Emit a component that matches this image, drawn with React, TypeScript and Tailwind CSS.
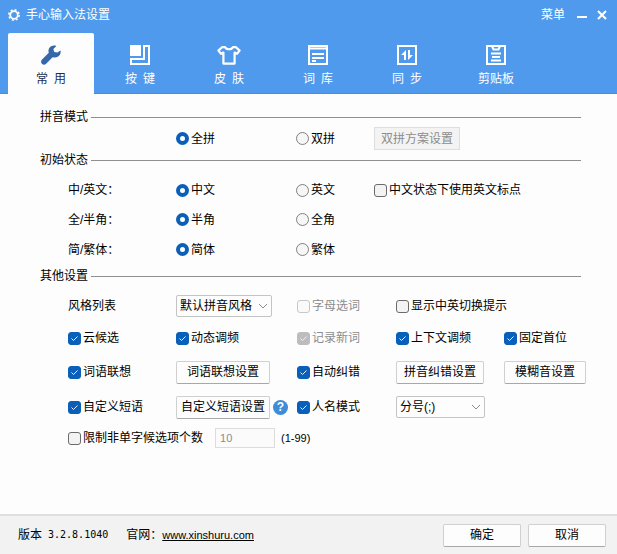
import { useState } from 'react';
import type { ReactNode } from 'react';

const TABS = ['常\u2002用', '按\u2002键', '皮\u2002肤', '词\u2002库', '同\u2002步', '剪贴板'];

const TAB_ICONS: ReactNode[] = [
  <svg key="common" className="h-5 w-5" viewBox="0 0 20 20" fill="currentColor">
    <path d="M19.5 5.4 16.4 7.6 13.2 7 12.4 4 15.4.9C12.6-.1 9.3.8 8 3.4 7.3 4.9 7.3 6.5 7.8 7.8L.8 14.8C-.2 15.9-.2 17.7.9 18.8 2 20 3.8 20 4.9 18.9L11.6 12.2C14.2 13.1 17.4 12.3 18.9 9.8 19.7 8.4 19.9 6.8 19.5 5.4Z" />
  </svg>,
  <svg key="keys" className="h-5 w-5" viewBox="0 0 20 20">
    <path fill="currentColor" d="M0 0H11V11H0Z" />
    <path fill="none" stroke="currentColor" strokeWidth="2" d="M14 1H19V19H1V14H14Z" />
  </svg>,
  <svg key="skin" className="h-5 w-6" viewBox="0 0 24 20" fill="none" stroke="currentColor" strokeWidth="2.2" strokeLinejoin="round">
    <path d="M8 2C9.5 5 14.5 5 16 2L19 2.2 22.6 5.6 20 8.8 17.6 7.6V18.6H6.4V7.6L4 8.8 1.4 5.6 5 2.2Z" />
  </svg>,
  <svg key="dict" className="h-5 w-5" viewBox="0 0 20 20" fill="none" stroke="currentColor" strokeWidth="2">
    <path d="M1 1H19V19H1ZM1 3.5H19M4 9H16M4 13H16M4 16H8" />
  </svg>,
  <svg key="sync" className="h-5 w-5" viewBox="0 0 20 20" fill="none" stroke="currentColor" strokeWidth="2">
    <path d="M1 1H19V19H1Z" />
    <path fill="currentColor" stroke="none" d="M9 5V15H7V10H4ZM11 15V5H13V10H16Z" />
  </svg>,
  <svg key="clip" className="h-5 w-5" viewBox="0 0 20 20" fill="none" stroke="currentColor" strokeWidth="2">
    <path d="M1 1H19V19H1ZM6 1 7.5 4.5H12.5L14 1M5 8.5H15M6 12H14M5 15.5H15" />
  </svg>,
];

const ROW =
  'grid grid-cols-[minmax(0,108fr)_minmax(0,121fr)_minmax(0,99fr)_minmax(0,108fr)_minmax(0,82fr)] items-center';
const RADIO_ROW =
  'grid grid-cols-[minmax(0,108fr)_minmax(0,120fr)_minmax(0,78fr)_minmax(0,212fr)] items-center';

const Section = ({ title, className = '' }: { title: string; className?: string }) => (
  <div className={`flex h-[18px] items-center gap-[3px] pl-10 pr-9 ${className}`}>
    <h2>{title}</h2>
    <div className="h-px flex-1 bg-[#8f8f8f]" />
  </div>
);

type CheckProps = { label: string; checked?: boolean; disabled?: boolean };

const Check = ({ label, checked = false, disabled = false }: CheckProps) => {
  const [on, setOn] = useState(checked);
  return (
    <label className={`flex items-center gap-0.5 whitespace-nowrap ${disabled ? 'text-[#8c8c8c]' : ''}`}>
      <span className="grid">
        <input
          type="checkbox"
          checked={on}
          disabled={disabled}
          onChange={() => setOn(!on)}
          className="[grid-area:1/1] h-[13px] w-[13px] appearance-none rounded-[3px] border border-[#6b6b6b] bg-[#f3f3f3] checked:border-[#0a5fb8] checked:bg-[#0a5fb8] disabled:border-[#c8c8c8] disabled:bg-[#fafafa] disabled:checked:border-[#bdbdbd] disabled:checked:bg-[#bdbdbd]"
        />
        {on && (
          <svg className="pointer-events-none [grid-area:1/1] h-[13px] w-[13px]" viewBox="0 0 13 13" fill="none" stroke="#e8f2ff">
            <path d="M3.5 6.5 5.5 8.5 9.5 4.5" />
          </svg>
        )}
      </span>
      {label}
    </label>
  );
};

type RadioPairProps = { name: string; options: string[] };

const RadioPair = ({ name, options }: RadioPairProps) => (
  <>
    {options.map((option, i) => (
      <label key={option} className="flex items-center gap-0.5 whitespace-nowrap">
        <input
          type="radio"
          name={name}
          defaultChecked={i === 0}
          className="h-[13px] w-[13px] appearance-none rounded-full border border-[#808080] bg-[#f6f6f6] checked:border-4 checked:border-[#0a5fb8] checked:bg-white"
        />
        {option}
      </label>
    ))}
  </>
);

const Select = ({ label, value, className }: { label: string; value: string; className: string }) => (
  <span className={`grid items-center ${className}`}>
    <select
      aria-label={label}
      className="[grid-area:1/1] h-[22px] w-full appearance-none rounded-xs border border-[#c4c4c4] bg-[#fdfdfd] pl-[3px]"
    >
      <option>{value}</option>
    </select>
    <svg className="pointer-events-none [grid-area:1/1] mr-1 h-2 w-2.5 justify-self-end" viewBox="0 0 10 8" fill="none" stroke="#8a8a8a">
      <path d="M1 2 5 6 9 2" />
    </svg>
  </span>
);

const PushButton = ({ children, className = '' }: { children: ReactNode; className?: string }) => (
  <button
    type="button"
    className={`h-[23px] whitespace-nowrap rounded-xs border border-[#d0d0d0] border-b-[#a8a8a8] bg-[#fdfdfd] ${className}`}
  >
    {children}
  </button>
);

const App = () => {
  const [tab, setTab] = useState(0);

  return (
    <div className="flex min-h-screen flex-col bg-[#fdfdfd] font-['Liberation_Sans','Noto_Sans_CJK_SC',sans-serif] text-xs leading-4 text-black">
      <header className="bg-[#509aee] text-white shadow-[inset_0_-1px_0_#4a8cd6]">
        {/* Title bar */}
        <div className="flex h-[33px] items-center pl-2 pr-2.5 pb-1">
          <svg className="h-3 w-3" viewBox="0 0 12 12" fill="none" stroke="currentColor">
            <circle cx="6" cy="6" r="3.8" strokeWidth="1.8" />
            <circle cx="6" cy="6" r="5.2" strokeWidth="1.5" strokeDasharray="2 2.08" />
          </svg>
          <h1 className="ml-1.5">手心输入法设置</h1>
          <button type="button" className="ml-auto">菜单</button>
          <button type="button" aria-label="最小化" className="ml-3">
            <svg className="h-3 w-2.5" viewBox="0 0 10 12" stroke="currentColor" strokeWidth="2">
              <path d="M0 8H10" />
            </svg>
          </button>
          <button type="button" aria-label="关闭" className="ml-2.5">
            <svg className="h-3 w-2.5" viewBox="0 0 10 12" stroke="currentColor" strokeWidth="2">
              <path d="M1 2 9 10M9 2 1 10" />
            </svg>
          </button>
        </div>

        {/* Tabs */}
        <nav className="flex gap-[3px] pl-2">
          {TABS.map((label, i) => (
            <button
              key={label}
              type="button"
              onClick={() => setTab(i)}
              className={`flex h-[61px] w-[86px] flex-col items-center gap-1.5 rounded-t-xs pt-3 ${
                tab === i ? 'bg-[#fdfdfd] text-[#3468ab]' : ''
              }`}
            >
              {TAB_ICONS[i]}
              <span className={tab === i ? 'text-[#1c2f50]' : ''}>{label}</span>
            </button>
          ))}
        </nav>
      </header>

      <main className="flex-1 pt-3.5">
        <Section title="拼音模式" />
        <div className="pl-[68px] pr-[31px]">
          <div className={`${RADIO_ROW} h-[25px]`}>
            <span />
            <RadioPair name="pinyin" options={['全拼', '双拼']} />
            <button
              type="button"
              disabled
              className="h-[23px] w-[86px] border border-[#dedede] bg-[#f3f3f3] text-[#8c8c8c]"
            >
              双拼方案设置
            </button>
          </div>
        </div>

        <Section title="初始状态" />
        <div className="pt-1.5 pl-[68px] pr-[31px]">
          <div className={`${RADIO_ROW} h-[30px]`}>
            <span>中/英文：</span>
            <RadioPair name="lang" options={['中文', '英文']} />
            <Check label="中文状态下使用英文标点" />
          </div>
          <div className={`${RADIO_ROW} h-[29px]`}>
            <span>全/半角：</span>
            <RadioPair name="width" options={['半角', '全角']} />
          </div>
          <div className={`${RADIO_ROW} h-[31px]`}>
            <span>简/繁体：</span>
            <RadioPair name="script" options={['简体', '繁体']} />
          </div>
        </div>

        <Section title="其他设置" className="mt-0.5" />
        <div className="pt-[5px] pl-[68px] pr-[31px]">
          <div className={`${ROW} h-8`}>
            <span>风格列表</span>
            <Select label="风格列表" value="默认拼音风格" className="w-24" />
            <Check label="字母选词" disabled />
            <Check label="显示中英切换提示" />
          </div>
          <div className={`${ROW} h-8`}>
            <Check label="云候选" checked />
            <Check label="动态调频" checked />
            <Check label="记录新词" checked disabled />
            <Check label="上下文调频" checked />
            <Check label="固定首位" checked />
          </div>
          <div className={`${ROW} h-9`}>
            <Check label="词语联想" checked />
            <PushButton className="w-[94px]">词语联想设置</PushButton>
            <Check label="自动纠错" checked />
            <PushButton className="w-[88px]">拼音纠错设置</PushButton>
            <PushButton>模糊音设置</PushButton>
          </div>
          <div className={`${ROW} h-[34px]`}>
            <Check label="自定义短语" checked />
            <div className="flex items-center gap-[3px]">
              <PushButton className="w-[94px]">自定义短语设置</PushButton>
              <button
                type="button"
                aria-label="帮助"
                className="flex h-[15px] w-[15px] items-center justify-center rounded-full bg-[#3d8bd9] font-bold text-white"
              >
                ?
              </button>
            </div>
            <Check label="人名模式" checked />
            <Select label="人名模式" value="分号(;)" className="w-[89px]" />
          </div>
          <div className="flex h-7 items-center">
            <Check label="限制非单字候选项个数" />
            <input
              type="text"
              aria-label="候选项个数"
              defaultValue="10"
              disabled
              className="ml-3 h-5 w-[60px] border border-[#dcdcdc] bg-[#fbfbfb] pl-1 text-[11px] text-[#8c8c8c]"
            />
            <span className="ml-1.5 text-[11px]">(1-99)</span>
          </div>
        </div>
      </main>

      <footer className="flex h-10 items-center border-t-2 border-[#dedede] bg-[#f2f2f2] pl-[18px] pr-[11px]">
        <span>版本</span>
        <span className="ml-1.5 font-['DejaVu_Sans_Mono',monospace] text-[10px]">3.2.8.1040</span>
        <span className="ml-[18px]">官网：</span>
        <a href="#" className="text-[11px] underline">www.xinshuru.com</a>
        <PushButton className="ml-auto h-7 w-[78px]">确定</PushButton>
        <PushButton className="ml-[7px] h-7 w-[78px]">取消</PushButton>
      </footer>
    </div>
  );
};

export default App;
